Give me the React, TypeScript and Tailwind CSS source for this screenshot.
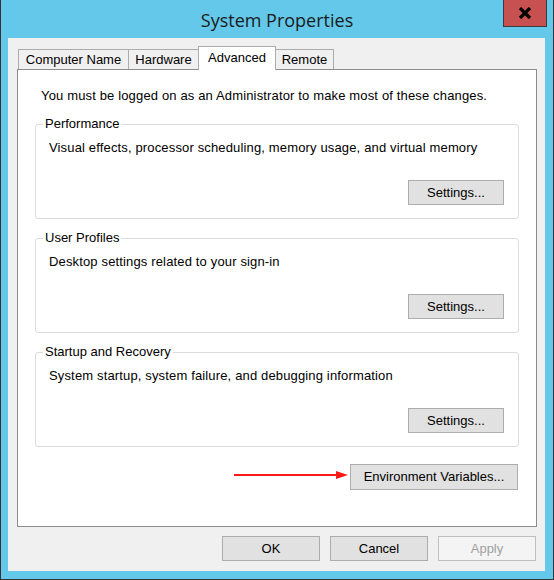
import React from "react";

function Btn({
  children,
  className = "",
}: {
  children: React.ReactNode;
  className?: string;
}) {
  return (
    <div
      className={
        "flex items-center justify-center border bg-[#e1e1e1] border-[#adadad] text-black " +
        className
      }
    >
      {children}
    </div>
  );
}

function Group({
  title,
  text,
  focused,
}: {
  title: string;
  text: string;
  focused?: boolean;
}) {
  return (
    <fieldset className="border border-[#dcdcdc] rounded-[3px] p-0 m-0 min-w-0">
      <legend className="ml-[7px] px-[2px] leading-[16px] text-black">{title}</legend>
      <div className="flex flex-col pl-[13px] pr-[14px] pb-[13px] pt-[8px]">
        <div className="leading-[16px] text-black tracking-[0.15px]">{text}</div>
        <div className="flex justify-end mt-[24px]">
          <Btn
            className={
              "w-[96px] h-[25px] " + (focused ? "border-[#3c7fb1]" : "")
            }
          >
            Settings...
          </Btn>
        </div>
      </div>
    </fieldset>
  );
}

export default function App() {
  const tabs = [
    { label: "Computer Name", w: "w-[111px]" },
    { label: "Hardware", w: "w-[71px]" },
    { label: "Advanced", w: "w-[78px]", active: true },
    { label: "Remote", w: "w-[59px]" },
  ];

  return (
    <div
      className="relative w-[554px] h-[580px] bg-[#64c8ea] border-x border-b border-[#353535] flex flex-col pb-[8px] text-[13px]"
      style={{ fontFamily: '"Liberation Sans", Arial, sans-serif' }}
    >
      {/* Title bar */}
      <div className="h-[38px] flex items-center justify-center pt-[2px]">
        <span
          className="text-[18px] text-[#1b1b1b]"
          style={{ fontFamily: '"Open Sans", "Noto Sans", sans-serif' }}
        >
          System Properties
        </span>
      </div>
      <div className="absolute top-0 right-[6px] w-[44px] h-[27px] bg-[#c75050] border-x border-b border-[#3b3b3b] flex items-center justify-center">
        <svg width="14" height="12" viewBox="0 0 14 12">
          <path d="M2 1 L12 11 M12 1 L2 11" stroke="#000" strokeWidth="3.2" />
        </svg>
      </div>

      {/* Client area */}
      <div className="flex-1 ml-[7px] mr-[8px] bg-[#f0f0f0] pl-[9px] pt-[8px] flex flex-col">
        {/* Tabs */}
        <div className="flex items-end h-[24px] -mb-px pl-[1px]">
          {tabs.map((t, i) =>
            t.active ? (
              <div
                key={t.label}
                className={
                  "relative z-10 h-[24px] -ml-px bg-white border border-b-0 border-[#acacac] flex items-center justify-center pb-[2px] " +
                  t.w
                }
              >
                {t.label}
              </div>
            ) : (
              <div
                key={t.label}
                className={
                  "h-[20px] mb-[1px] border border-b-0 border-[#acacac] bg-[#f0f0f0] flex items-center justify-center " +
                  (i > 0 ? "-ml-px " : "") +
                  t.w
                }
              >
                {t.label}
              </div>
            )
          )}
        </div>

        {/* Tab panel */}
        <div className="w-[520px] h-[458px] border border-[#8c8c8c] bg-white px-[17px] pt-[18px] flex flex-col">
          <div className="pl-[6px] leading-[16px] text-black tracking-[0.15px]">
            You must be logged on as an Administrator to make most of these changes.
          </div>
          <div className="mt-[12px] flex flex-col gap-[11px]">
            <Group
              title="Performance"
              text="Visual effects, processor scheduling, memory usage, and virtual memory"
              focused
            />
            <Group title="User Profiles" text="Desktop settings related to your sign-in" />
            <Group
              title="Startup and Recovery"
              text="System startup, system failure, and debugging information"
            />
          </div>
          <div className="mt-[17px] flex justify-end items-start pr-[1px]">
            <svg width="116" height="26" viewBox="0 0 116 26">
              <line x1="0" y1="11" x2="104" y2="11" stroke="#ff1a1a" strokeWidth="2" />
              <polygon points="102,7 114,11 102,15" fill="#ff1a1a" />
            </svg>
            <Btn className="w-[168px] h-[26px]">Environment Variables...</Btn>
          </div>
        </div>

        {/* Bottom buttons */}
        <div className="mt-[9px] flex justify-end gap-[10px] pr-[9px]">
          <Btn className="w-[98px] h-[25px]">OK</Btn>
          <Btn className="w-[98px] h-[25px]">Cancel</Btn>
          <div className="w-[98px] h-[25px] flex items-center justify-center border border-[#bfbfbf] bg-[#f4f4f4] text-[#a0a0a0]">
            Apply
          </div>
        </div>
      </div>
    </div>
  );
}
